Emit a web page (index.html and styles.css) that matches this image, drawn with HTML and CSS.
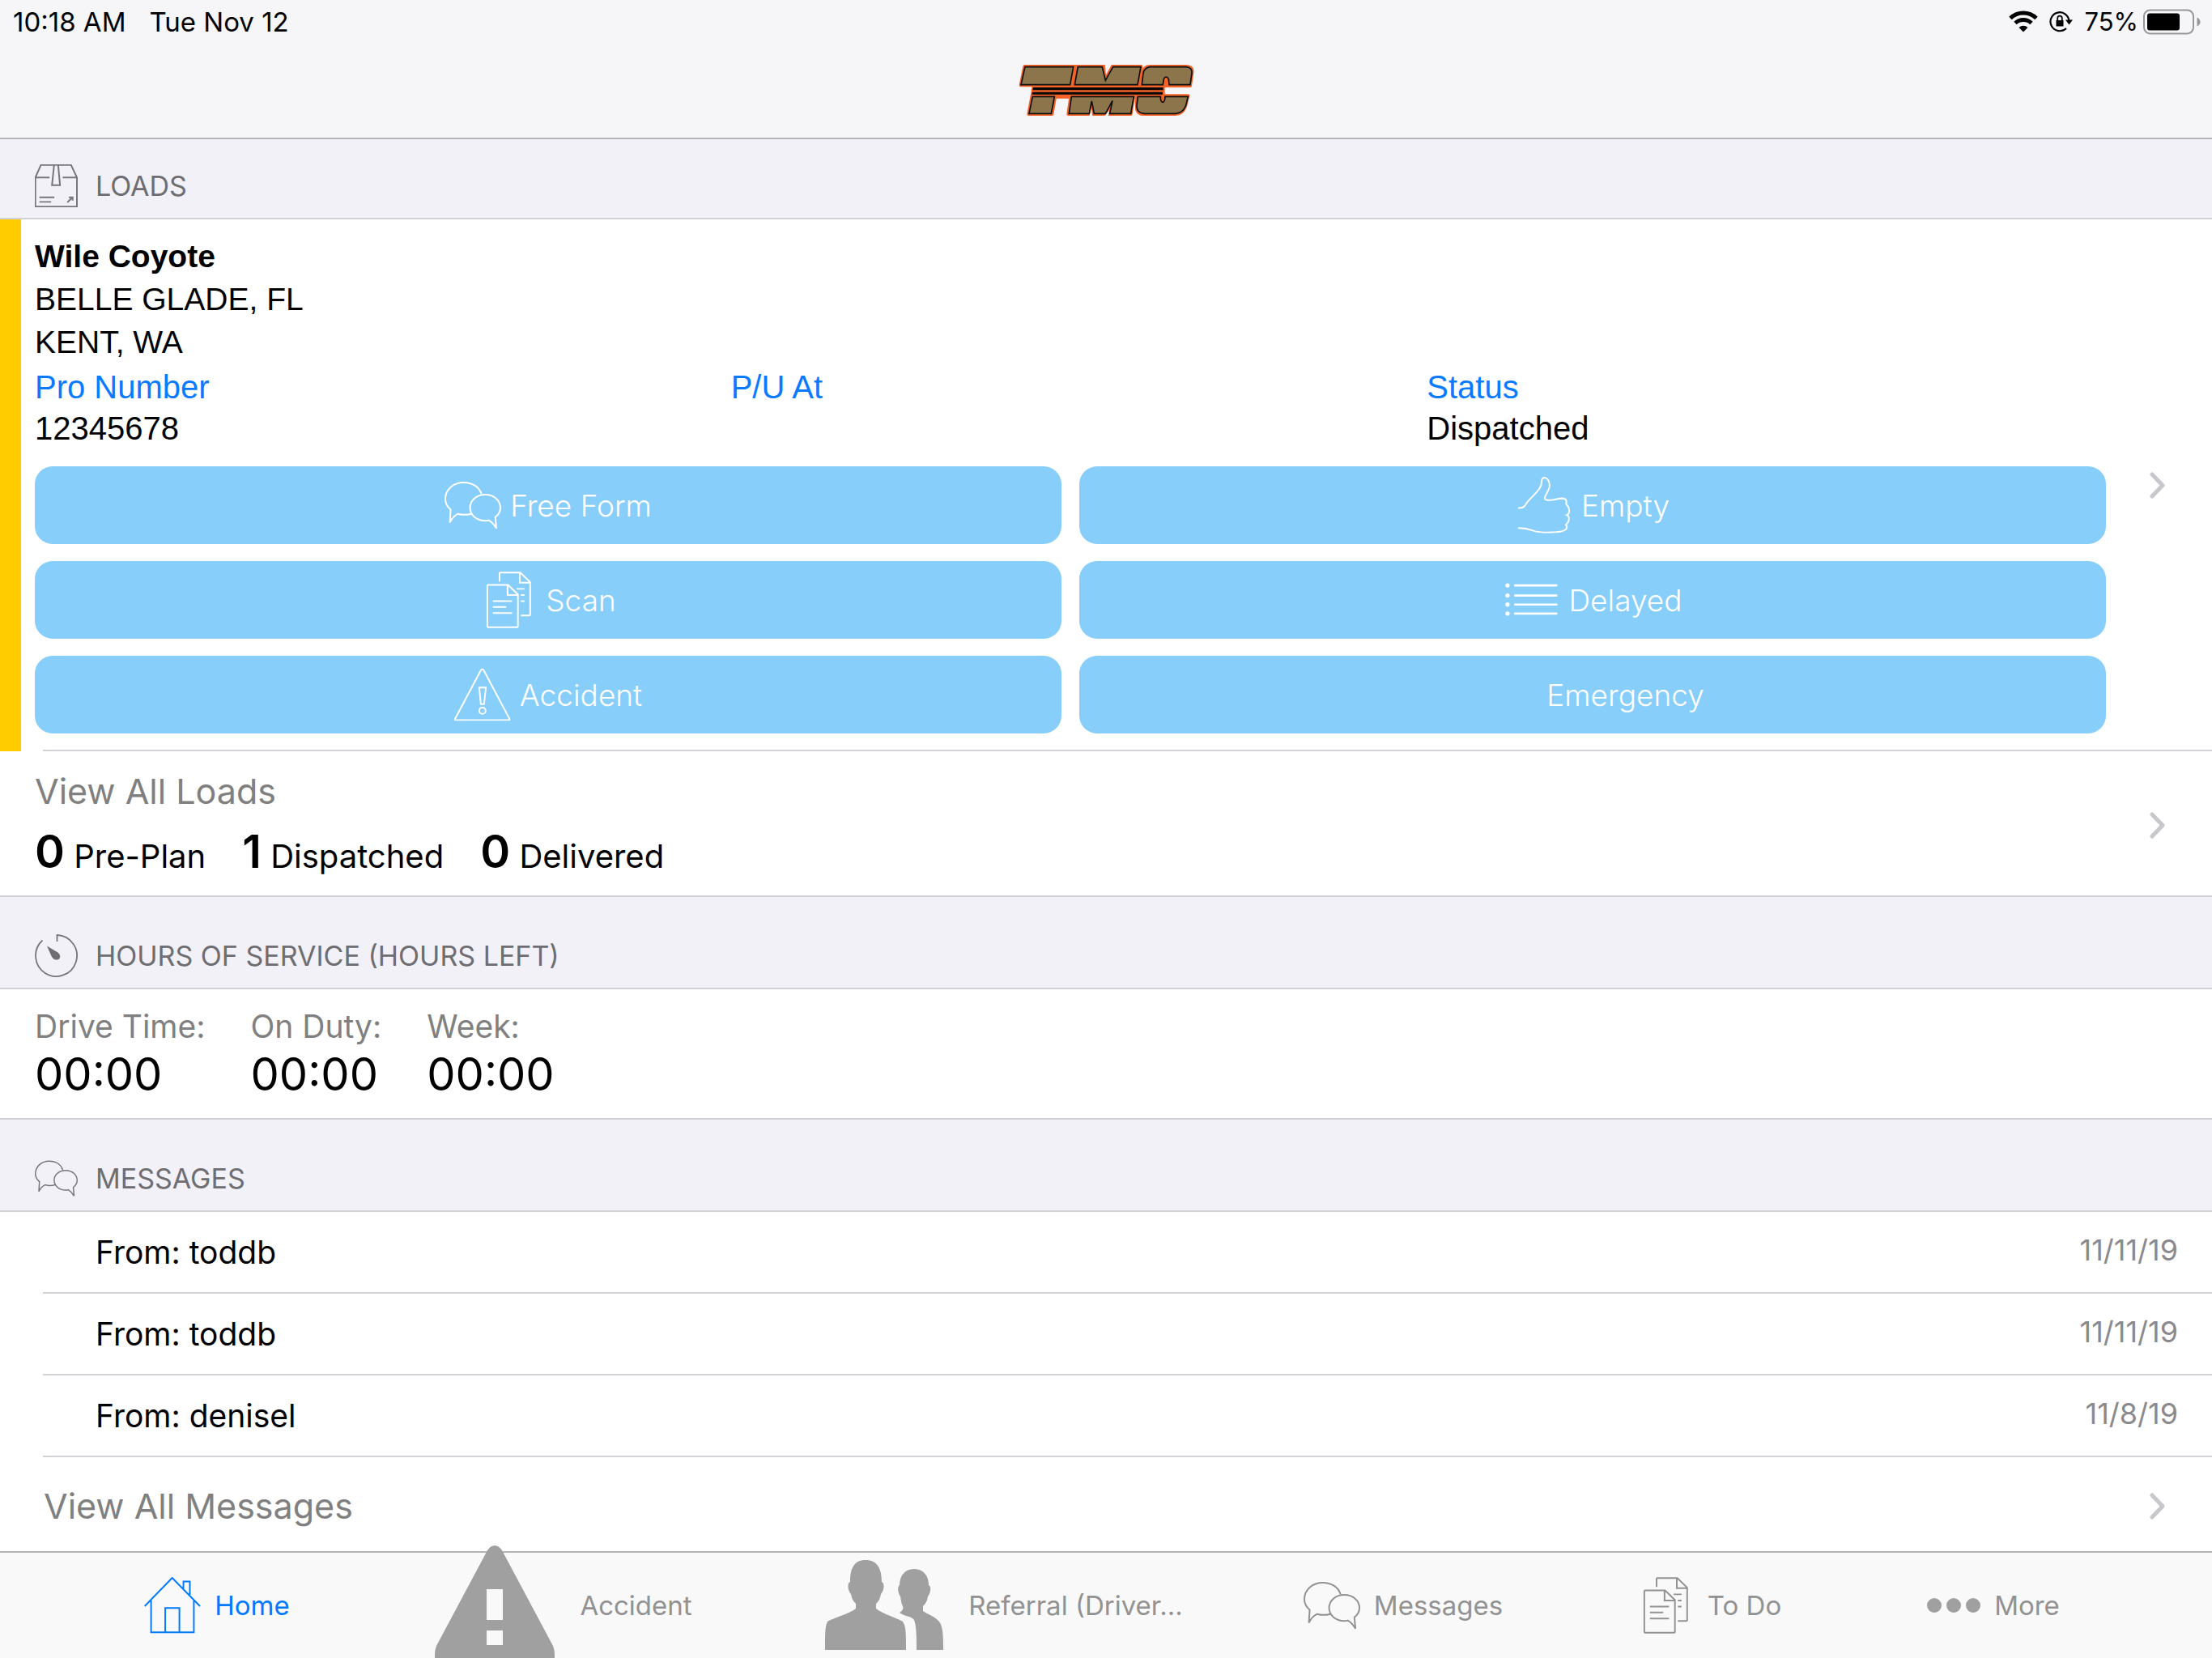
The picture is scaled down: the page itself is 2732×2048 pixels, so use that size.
FILE: index.html
```html
<!DOCTYPE html>
<html lang="en">
<head>
<meta charset="utf-8">
<meta name="viewport" content="width=device-width, initial-scale=1">
<title>TMC Driver</title>
<link rel="stylesheet" href="styles.css">
</head>
<body>
<svg class="sprite" aria-hidden="true">
  <symbol id="chat" viewBox="84 51 213 213">
    <path d="M223 116C214 88 188 72 156 72C118 72 87 98 87 134C87 150 95 164 107 174L104 223C110 210 120 197 135 190C152 195 170 194 185 190"/>
    <path d="M237 118C270 118 294 140 294 167C294 182 288 193 275 202L279 245C272 232 262 221 250 214C246 216 242 216 237 216C204 216 180 194 180 167C180 140 204 118 237 118Z"/>
  </symbol>
  <symbol id="docs" viewBox="212 405 213 213">
    <path d="M285 442V412Q285 409 288 409H363L400 445V567Q400 570 397 570H365M361 409V447H400M349 470H379M365 493H379M365 516H379"/>
    <path d="M242 455H317L354 491V611Q354 614 351 614H242Q239 614 239 611V458Q239 455 242 455ZM315 456V493H354M260 516H332M260 538H310M260 561H332"/>
  </symbol>
  <symbol id="chevron" viewBox="0 0 19 33">
    <path d="M3 3L16 16.500L3 30"/>
  </symbol>
</svg>

<header class="topbar">
  <div class="status">
    <div class="status-left"><span>10:18 AM</span><span>Tue Nov 12</span></div>
    <div class="status-right">
      <svg class="wifi" viewBox="0 0 36 27" aria-label="Wi-Fi">
        <path d="M2 9.500A23 23 0 0 1 34 9.500M8 15.500A14.500 14.500 0 0 1 28 15.500" fill="none" stroke="#000" stroke-width="5"/>
        <path d="M18 26.500L12.500 21A8 8 0 0 1 23.500 21Z"/>
      </svg>
      <svg class="lock" viewBox="0 0 29 27" aria-label="Rotation locked">
        <path d="M24.500 14A11.500 11.500 0 1 0 21 22" fill="none" stroke="#000" stroke-width="2.200"/>
        <path d="M20 11.500H29L24.500 17.500Z"/>
        <path d="M8.500 12H17.500V19.500H8.500Z"/>
        <path d="M10.200 12V9.500A2.800 2.800 0 0 1 15.800 9.500V12" fill="none" stroke="#000" stroke-width="1.800"/>
      </svg>
      <span>75%</span>
      <svg class="battery" viewBox="0 0 71 32" aria-label="Battery">
        <rect x="1" y="1.500" width="61" height="29" rx="7.500" fill="none" stroke="#98989b" stroke-width="2"/>
        <rect x="5" y="5.500" width="40" height="21" rx="3"/>
        <path d="M66.500 10.500Q70.500 12.500 70.500 16T66.500 21.500Z" fill="#98989b"/>
      </svg>
    </div>
  </div>
  <div class="brand">
    <svg class="logo" viewBox="54 58 651 195" role="img" aria-label="TMC">
      <g fill="#f4622a" stroke="#f4622a" stroke-width="12" stroke-linejoin="round">
        <path d="M76 67H508L496 137H62Z"/>
        <path d="M540 67H675Q700 67 697 90L690 139H500L512 90Q520 67 540 67Z"/>
        <path d="M110 139H590V180H104Z"/>
        <path d="M104 176H190L178 244H91Z"/>
        <path d="M248 176H480L470 244H238Z"/>
        <path d="M490 176H682L672 215Q662 244 634 244H520Q488 244 492 212Z"/>
      </g>
      <path d="M374 58L378 98L400 58ZM316 254L323 222L328 254ZM370 254L390 230L386 254Z" fill="#f6f6f8"/>
      <g fill="#8c744b" stroke="#0b0f0c" stroke-width="5">
        <path d="M78 69H257L245 135H63Z"/>
        <path d="M274 69H364L376 119L404 69H507L495 135H262Z"/>
        <path d="M542 69H674Q698 70 696 92L690 135H612L610 114Q600 98 592 114L589 135H511L516 92Q521 71 542 69Z"/>
        <path d="M106 179H187L175 242H93Z"/>
        <path d="M250 179H481L470 242H392L402 194L376 242H334L325 196L316 242H241Z"/>
        <path d="M496 179H580Q580 200 588 200T597 179H682L674 212Q664 240 636 242H520Q490 240 492 210Z"/>
      </g>
      <path d="M108 145H590V155H106ZM105 162H588V171H103Z" fill="#060606"/>
    </svg>
  </div>
</header>

<main>
  <section>
    <h2 class="section-head first">
      <svg class="head-icon" viewBox="129 608 160 160"><path d="M131 657L152 610H264L286 657V766H131ZM131 657H184M233 657H286M201 610L193 686H223L216 610M146 731H202M146 748H190M250 750L270 731M256 731H270V743"/></svg>
      LOADS
    </h2>
    <article class="load">
      <div class="load-body">
        <h3 class="load-name">Wile Coyote</h3>
        <p class="city">BELLE GLADE, FL</p>
        <p class="city">KENT, WA</p>
        <dl class="facts">
          <div><dt>Pro Number</dt><dd>12345678</dd></div>
          <div><dt>P/U At</dt><dd></dd></div>
          <div><dt>Status</dt><dd>Dispatched</dd></div>
        </dl>
        <div class="actions">
          <button type="button"><svg class="icon"><use href="#chat"/></svg>Free Form</button>
          <button type="button"><svg class="icon" viewBox="391 54 213 213"><path d="M400 171C416 173 424 168 430 156C445 130 480 112 487 84C489 74 485 58 498 57C515 58 521 80 517 96C512 112 503 120 500 133C500 142 510 142 530 141C548 138 575 128 581 143C583 150 578 155 583 160C592 165 592 180 592 185C592 192 587 196 583 198C590 200 592 205 591 213C591 226 582 230 579 235C588 240 582 252 572 256C550 265 490 264 465 259C445 253 430 245 400 247"/></svg>Empty</button>
          <button type="button"><svg class="icon"><use href="#docs"/></svg>Scan</button>
          <button type="button"><svg class="icon" viewBox="351 407 213 213"><path d="M391 459H553M391 497H553M391 531H553M391 565H553" stroke-width="8"/><g class="dots"><circle cx="366" cy="459" r="8"/><circle cx="366" cy="497" r="8"/><circle cx="366" cy="531" r="8"/><circle cx="366" cy="565" r="8"/></g></svg>Delayed</button>
          <button type="button"><svg class="icon" viewBox="121 757 213 213"><path d="M227 768Q230 768 232 772L329 955Q330 959 326 959H127Q122 959 124 955L221 772Q223 768 227 768ZM215 837H240L233 899H221Z"/><circle cx="227" cy="924" r="12"/></svg>Accident</button>
          <button type="button"><svg class="icon"></svg>Emergency</button>
        </div>
      </div>
      <a class="open" href="#load" aria-label="Open load"><svg class="chevron"><use href="#chevron"/></svg></a>
    </article>
    <a class="all-loads" href="#loads">
      <span class="all-loads-text">
        <span class="view-all">View All Loads</span>
        <span class="counts">
          <span><b>0</b> Pre-Plan</span>
          <span><b>1</b> Dispatched</span>
          <span><b>0</b> Delivered</span>
        </span>
      </span>
      <svg class="chevron"><use href="#chevron"/></svg>
    </a>
  </section>

  <section>
    <h2 class="section-head">
      <svg class="head-icon" viewBox="0 0 53 53"><path d="M27.500 9V1A25.500 25.500 0 1 1 9.500 7.500" stroke-width="1.800"/><path class="solid" d="M15 14.500L28.500 22.500C33 26 31.500 31.500 27.500 31.500C24 32 22 30 20.500 27Z"/></svg>
      HOURS OF SERVICE (HOURS LEFT)
    </h2>
    <dl class="hours">
      <div><dt>Drive Time:</dt><dd>00:00</dd></div>
      <div><dt>On Duty:</dt><dd>00:00</dd></div>
      <div><dt>Week:</dt><dd>00:00</dd></div>
    </dl>
  </section>

  <section>
    <h2 class="section-head">
      <svg class="head-icon"><use href="#chat"/></svg>
      MESSAGES
    </h2>
    <ul class="messages">
      <li><span>From: toddb</span><time datetime="2019-11-11">11/11/19</time></li>
      <li><span>From: toddb</span><time datetime="2019-11-11">11/11/19</time></li>
      <li><span>From: denisel</span><time datetime="2019-11-08">11/8/19</time></li>
    </ul>
    <a class="all-messages" href="#messages">
      <span class="view-all">View All Messages</span>
      <svg class="chevron"><use href="#chevron"/></svg>
    </a>
  </section>
</main>

<nav class="tabs">
  <a class="active" href="#home"><svg class="icon" viewBox="53 145 212 212"><path d="M55 254L158 148L262 254M79 232V352H239V232M200 188V162H224V212M132 352V261H185V352"/></svg>Home</a>
  <a class="wide" href="#accident"><svg class="hazard" viewBox="0 0 148 139"><path fill-rule="evenodd" d="M74 0Q79 0 83 6L146 124Q148 129 148 134V139H0V134Q0 129 2 124L65 6Q69 0 74 0ZM64 54V92H84V54ZM64 105V123H84V105Z"/></svg>Accident</a>
  <a class="wide" href="#referral"><svg class="people" viewBox="0 0 146 112"><path d="M50 0C64 0 70 10 70 27C74 28 73 38 69 42C68 48 66 51 63 54V60C70 66 90 72 96 76C100 82 100 90 100 111H0C0 90 0 82 3 76C9 72 31 66 38 60V54C35 51 33 48 32 42C28 38 27 28 31 27C31 10 36 0 50 0Z"/><path d="M110 11C122 11 128 20 128 31C132 33 130 41 127 45C126 51 124 54 121 57V63C127 67 136 70 141 76C146 83 146 95 146 111H113C113 95 113 82 110 74C107 69 98 70 92 65C96 62 97 60 96 57C94 54 94 50 93 45C90 41 89 33 92 31C92 20 98 11 110 11Z"/></svg>Referral (Driver...</a>
  <a href="#messages"><svg class="icon"><use href="#chat"/></svg>Messages</a>
  <a href="#todo"><svg class="icon"><use href="#docs"/></svg>To Do</a>
  <a href="#more"><svg class="more" viewBox="0 0 66 18"><circle cx="9" cy="9" r="9"/><circle cx="33" cy="9" r="9"/><circle cx="57" cy="9" r="9"/></svg>More</a>
</nav>
</body>
</html>
```

FILE: styles.css
```css
* {
  box-sizing: border-box;
}

body {
  margin: 0;
  min-height: 100vh;
  display: flex;
  flex-direction: column;
  background: #fff;
  color: #000;
  font-family: Inter, "Liberation Sans", sans-serif;
}

h2, h3, p, dl, dd, ul {
  margin: 0;
  padding: 0;
  font-weight: 400;
}

a {
  color: inherit;
  text-decoration: none;
}

svg {
  display: block;
  flex: none;
}

.sprite {
  position: absolute;
  width: 0;
  height: 0;
}

.icon {
  width: 70px;
  height: 70px;
  fill: none;
  stroke: currentColor;
  stroke-width: 6;
}

.chevron {
  width: 19px;
  height: 33px;
  fill: none;
  stroke: #c7c7cc;
  stroke-width: 5;
  stroke-linecap: round;
  stroke-linejoin: round;
}

/* Status bar and logo */
.topbar {
  background: #f6f6f8;
  border-bottom: 2px solid #b4b4b8;
}

.status {
  display: flex;
  justify-content: space-between;
  align-items: center;
  height: 53px;
  padding: 0 14px 0 16px;
}

.status-left {
  display: flex;
  gap: 29px;
  font-size: 33px;
}

.status-right {
  display: flex;
  align-items: center;
  font-size: 31px;
}

.wifi {
  width: 36px;
  height: 27px;
  margin-right: 14px;
}

.lock {
  width: 29px;
  height: 27px;
  margin-right: 14px;
}

.battery {
  width: 71px;
  height: 32px;
  margin-left: 6px;
}

.brand {
  display: flex;
  justify-content: center;
  padding: 26px 0;
}

.logo {
  width: 217px;
  height: 65px;
}

main {
  flex: 1;
}

/* Section headings */
.section-head {
  display: flex;
  align-items: center;
  gap: 22px;
  padding: 46px 43px 13px;
  background: #f2f1f7;
  border-bottom: 2px solid #d2d2d6;
  color: #6d6d72;
  font-size: 34px;
  line-height: 53px;
}

.section-head.first {
  padding-top: 31px;
}

.head-icon {
  width: 53px;
  height: 53px;
  fill: none;
  stroke: #77777b;
  stroke-width: 6;
}

.head-icon .solid {
  fill: #6d6d72;
  stroke: none;
}

/* Current load */
.load {
  display: flex;
  border-left: 26px solid #fc0;
  font-family: "Liberation Sans", Arial, sans-serif;
  font-size: 40px;
  line-height: 53px;
}

.load-body {
  flex: 1;
  padding: 19px 0 22px 17px;
}

.load-name {
  font-size: 39px;
  font-weight: 700;
}

.city {
  font-size: 39px;
}

.facts {
  display: grid;
  grid-template-columns: repeat(3, 1fr);
  gap: 21px;
  margin-top: 3px;
}

.facts dt {
  color: #0a7aff;
}

.facts dd {
  line-height: 49px;
}

.actions {
  display: grid;
  grid-template-columns: 1fr 1fr;
  gap: 21px 22px;
  margin-top: 22px;
}

.actions button {
  display: flex;
  align-items: center;
  justify-content: center;
  gap: 11px;
  height: 96px;
  padding: 0;
  border: 0;
  border-radius: 22px;
  background: #87cefb;
  color: #fff;
  font-family: Inter, sans-serif;
  font-size: 37px;
  font-weight: 300;
}

.dots {
  fill: currentColor;
  stroke: none;
}

.open {
  display: flex;
  align-items: center;
  padding: 0 58px 0 54px;
}

/* Load totals */
.all-loads {
  display: flex;
  align-items: center;
  justify-content: space-between;
  padding: 19px 58px 14px 43px;
  border-bottom: 2px solid #d2d2d6;
  position: relative;
}

.all-loads::before {
  content: "";
  position: absolute;
  left: 53px;
  right: 0;
  top: -2px;
  height: 2px;
  background: #d2d2d6;
}

.view-all {
  display: block;
  color: #808080;
  font-size: 43px;
  line-height: 60px;
}

.counts {
  display: flex;
  gap: 45px;
  margin-top: 17px;
  font-size: 40px;
  line-height: 68px;
}

.counts b {
  font-size: 56px;
  font-weight: 600;
  line-height: 1;
}

/* Hours of service */
.hours {
  display: flex;
  gap: 56px;
  padding: 21px 43px 19px;
  border-bottom: 2px solid #d2d2d6;
}

.hours dt {
  color: #808080;
  font-size: 39px;
  line-height: 49px;
}

.hours dd {
  font-size: 56px;
  line-height: 70px;
}

/* Messages */
.messages {
  list-style: none;
  margin-left: 53px;
}

.messages li {
  display: flex;
  align-items: center;
  justify-content: space-between;
  height: 101px;
  padding: 0 42px 0 65px;
  border-bottom: 2px solid #d2d2d6;
  font-size: 39px;
}

.messages time {
  padding-bottom: 5px;
  color: #8a8a8e;
  font-size: 36px;
}

.all-messages {
  display: flex;
  align-items: center;
  justify-content: space-between;
  height: 116px;
  padding: 4px 58px 0 54px;
}

/* Tab bar: the hazard sign is taller than the bar and rises over its top edge */
.tabs {
  display: grid;
  grid-template-columns: 358fr 498fr 590fr 396fr 360fr 342fr;
  grid-template-rows: 100%;
  height: 132px;
  padding: 0 99px 0 89px;
  background: #f9f9f9;
  border-top: 2px solid #b4b4b6;
  color: #929292;
  font-size: 33px;
}

.tabs a {
  display: flex;
  align-items: center;
  justify-content: center;
  gap: 17px;
  min-width: 0;
  white-space: nowrap;
}

.tabs a.active {
  color: #007aff;
}

.tabs a.wide {
  gap: 31px;
}

.hazard,
.people,
.more {
  fill: #a0a0a0;
}

.hazard {
  width: 148px;
  height: 139px;
  align-self: flex-end;
}

.people {
  width: 146px;
  height: 112px;
}

.more {
  width: 66px;
  height: 18px;
}
```
